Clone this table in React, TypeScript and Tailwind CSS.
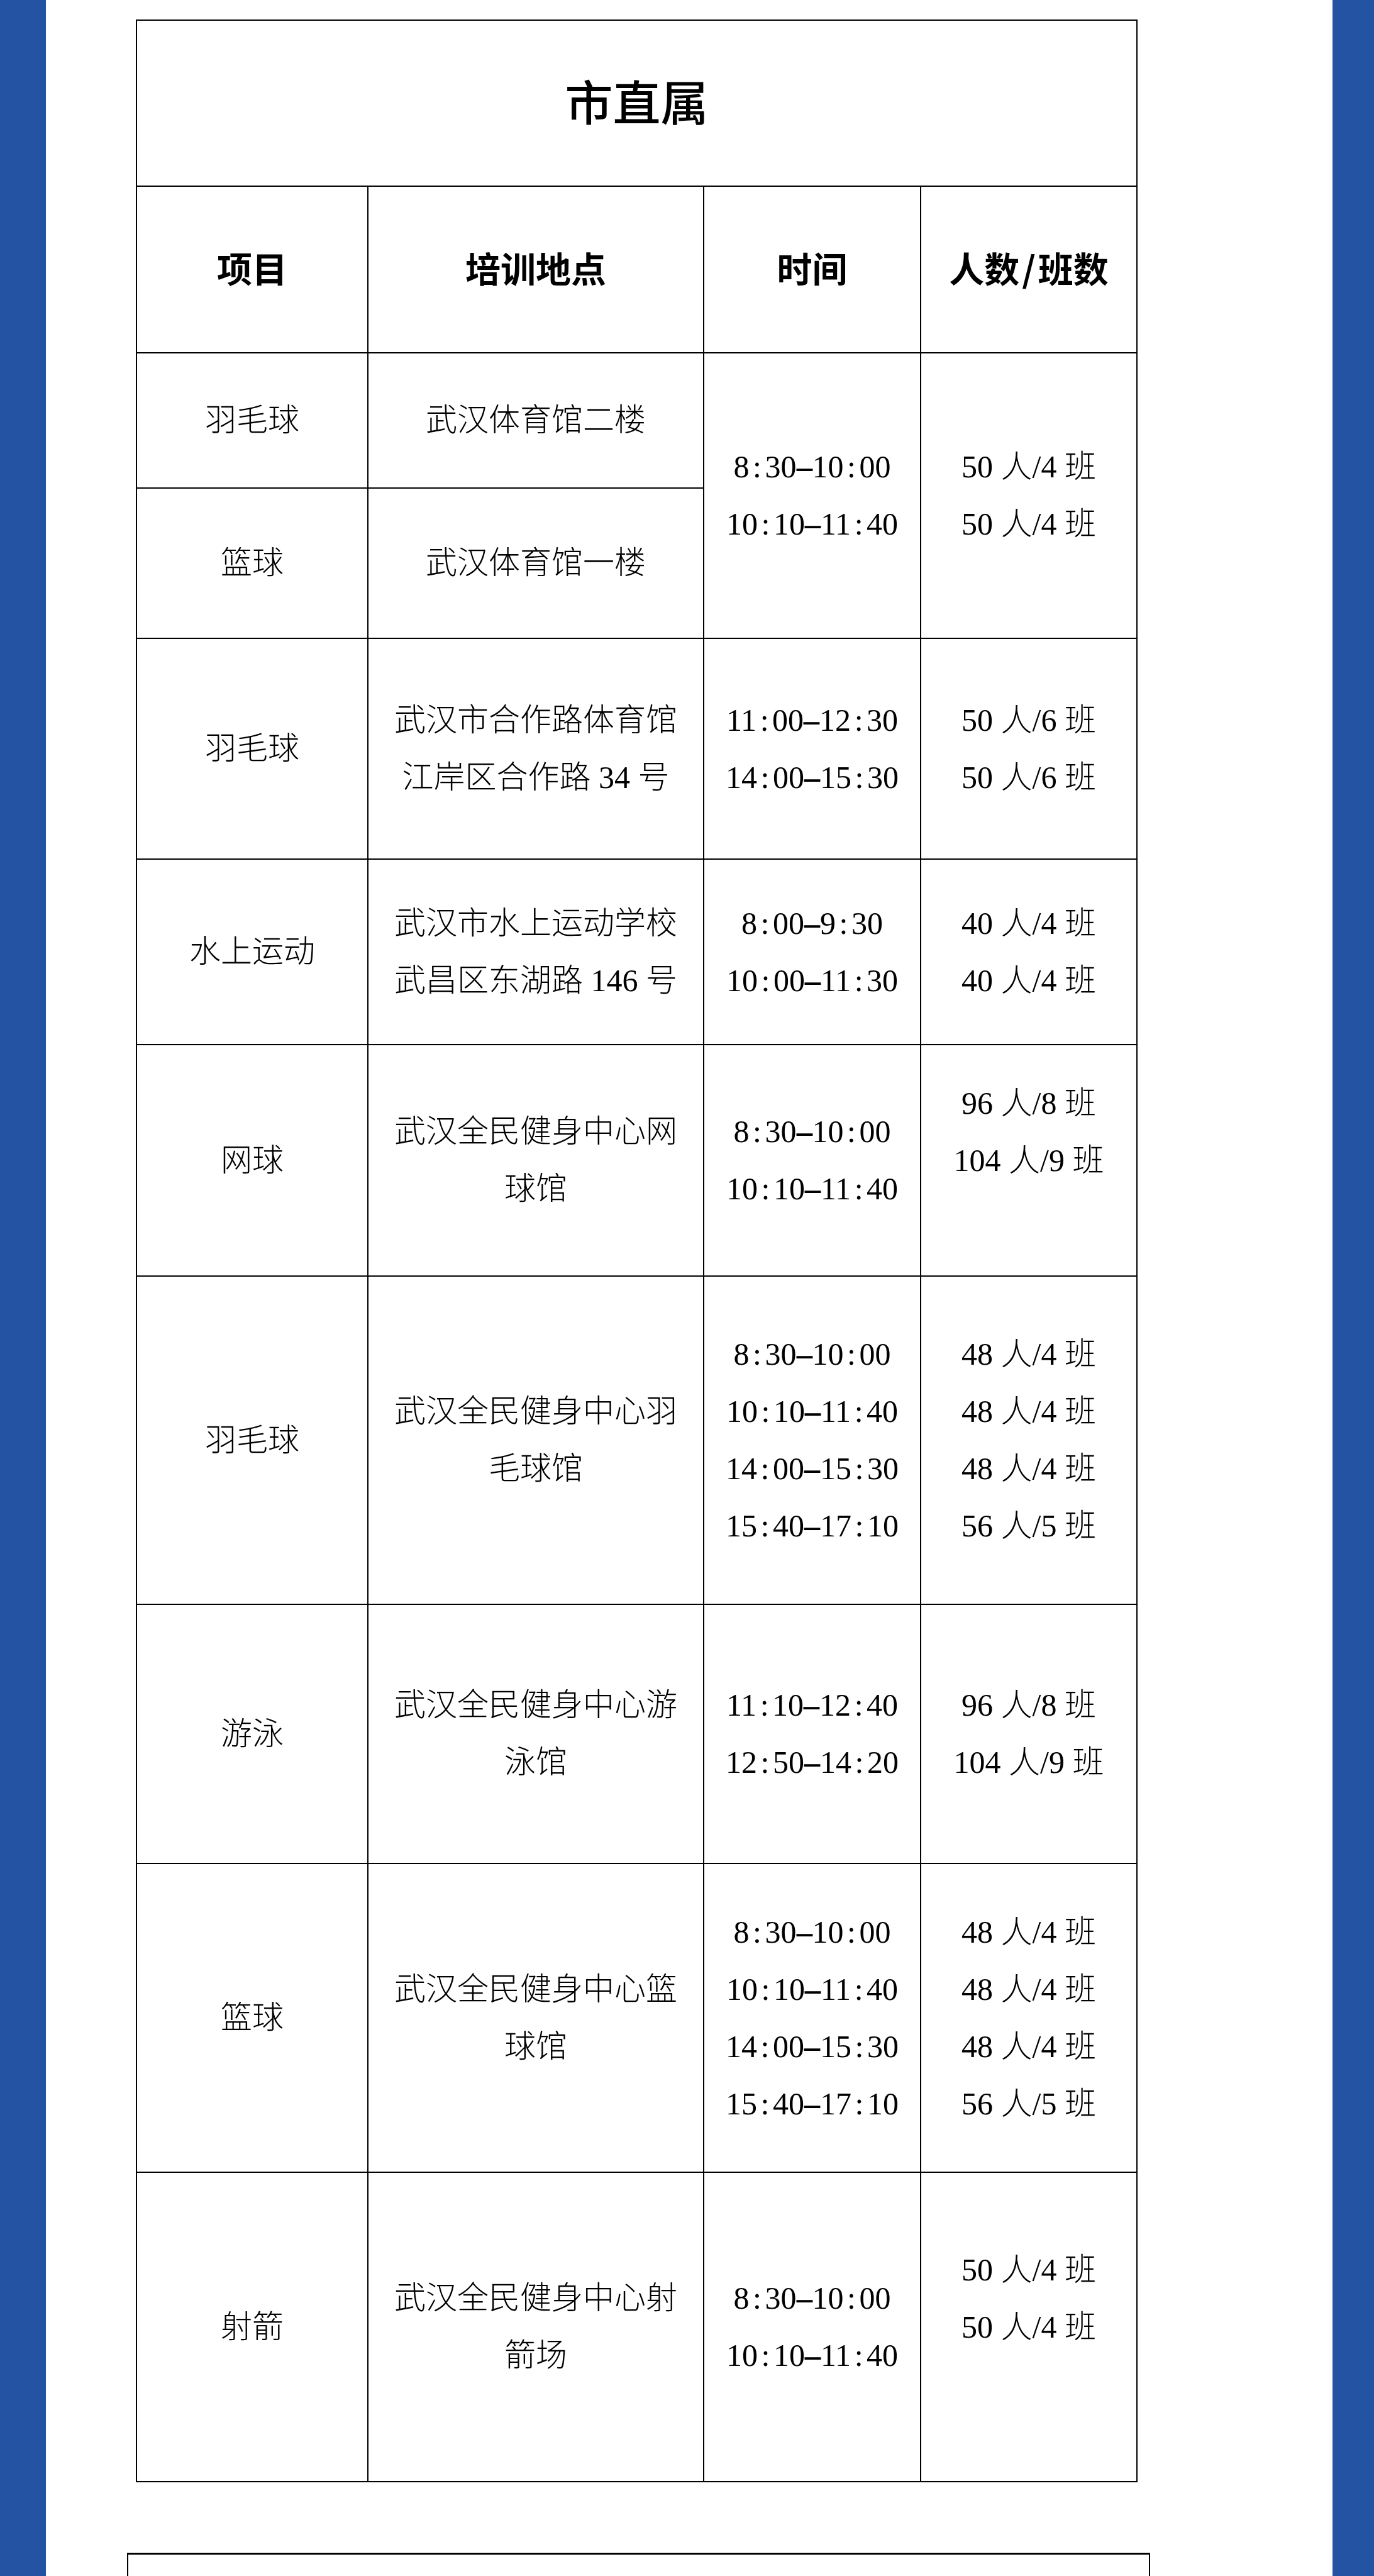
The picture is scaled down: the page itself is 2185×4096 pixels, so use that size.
type Row = {
    name: string;
    place: string[];
    time?: string[];
    count?: string[];
    height: string;
};

const BODY = "font-['Liberation_Serif','Noto_Sans_CJK_SC',serif] text-[50px] leading-[91px] font-light text-black";

const rows: Row[] = [
    {
        name: "羽毛球",
        place: ["武汉体育馆二楼"],
        time: ["8:30-10:00", "10:10-11:40"],
        count: ["50 人/4 班", "50 人/4 班"],
        height: "h-[215px]",
    },
    { name: "篮球", place: ["武汉体育馆一楼"], height: "h-[239px]" },
    {
        name: "羽毛球",
        place: ["武汉市合作路体育馆", "江岸区合作路 34 号"],
        time: ["11:00-12:30", "14:00-15:30"],
        count: ["50 人/6 班", "50 人/6 班"],
        height: "h-[351px]",
    },
    {
        name: "水上运动",
        place: ["武汉市水上运动学校", "武昌区东湖路 146 号"],
        time: ["8:00-9:30", "10:00-11:30"],
        count: ["40 人/4 班", "40 人/4 班"],
        height: "h-[295px]",
    },
    {
        name: "网球",
        place: ["武汉全民健身中心网", "球馆"],
        time: ["8:30-10:00", "10:10-11:40"],
        count: ["96 人/8 班", "104 人/9 班", ""],
        height: "h-[368px]",
    },
    {
        name: "羽毛球",
        place: ["武汉全民健身中心羽", "毛球馆"],
        time: ["8:30-10:00", "10:10-11:40", "14:00-15:30", "15:40-17:10"],
        count: ["48 人/4 班", "48 人/4 班", "48 人/4 班", "56 人/5 班"],
        height: "h-[522px]",
    },
    {
        name: "游泳",
        place: ["武汉全民健身中心游", "泳馆"],
        time: ["11:10-12:40", "12:50-14:20"],
        count: ["96 人/8 班", "104 人/9 班"],
        height: "h-[412px]",
    },
    {
        name: "篮球",
        place: ["武汉全民健身中心篮", "球馆"],
        time: ["8:30-10:00", "10:10-11:40", "14:00-15:30", "15:40-17:10"],
        count: ["48 人/4 班", "48 人/4 班", "48 人/4 班", "56 人/5 班"],
        height: "h-[491px]",
    },
    {
        name: "射箭",
        place: ["武汉全民健身中心射", "箭场"],
        time: ["8:30-10:00", "10:10-11:40"],
        count: ["50 人/4 班", "50 人/4 班", ""],
        height: "h-[492px]",
    },
];

// colon and dash are half-width in the source, like the digits
function Time({ text }: { text: string }) {
    return (
        <>
            {text.split("").map((ch, i) =>
                ch === ":" ? (
                    <span key={i} className="inline-block w-[0.5em] text-center">:</span>
                ) : ch === "-" ? (
                    <span key={i} className="inline-block w-[0.5em] text-center scale-x-[2]">-</span>
                ) : (
                    ch
                )
            )}
        </>
    );
}

function Lines({ items, time }: { items: string[]; time?: boolean }) {
    return (
        <div className="flex flex-col items-center">
            {items.map((t, i) => (
                <div key={i} className="whitespace-pre h-[91px]">
                    {time ? <Time text={t} /> : t}
                </div>
            ))}
        </div>
    );
}

const td = "border-2 border-black text-center align-middle p-0";

export default function App() {
    return (
        <div className="flex w-full h-[4096px] overflow-hidden bg-white">
            <div className="w-[73px] shrink-0 bg-[#2553a4]" />

            <div className="flex-1 flex flex-col pt-[31px]">
                <table className="ml-[143px] border-collapse table-fixed w-[1593px]">
                    <colgroup>
                        <col className="w-[368px]" />
                        <col className="w-[534px]" />
                        <col className="w-[345px]" />
                        <col className="w-[344px]" />
                    </colgroup>
                    <tbody className={BODY}>
                        <tr className="h-[264px]">
                            <td
                                colSpan={4}
                                className="border-2 border-black text-center align-middle pb-[10px] font-['Noto_Sans_CJK_SC',sans-serif] text-[76px] font-medium leading-none"
                            >
                                市直属
                            </td>
                        </tr>
                        <tr className="h-[265px] font-['Noto_Sans_CJK_SC',sans-serif] text-[56px] font-bold">
                            <td className={`${td} pb-[8px]`}>项目</td>
                            <td className={`${td} pb-[8px]`}>培训地点</td>
                            <td className={`${td} pb-[8px]`}>时间</td>
                            <td className={`${td} pb-[8px]`}>
                                人数<span className="px-[4px]">/</span>班数
                            </td>
                        </tr>
                        {rows.map((r, i) => (
                            <tr key={i} className={r.height}>
                                <td className={td}>
                                    <Lines items={[r.name]} />
                                </td>
                                <td className={td}>
                                    <Lines items={r.place} />
                                </td>
                                {r.time && (
                                    <td rowSpan={i === 0 ? 2 : 1} className={td}>
                                        <Lines items={r.time} time />
                                    </td>
                                )}
                                {r.count && (
                                    <td rowSpan={i === 0 ? 2 : 1} className={td}>
                                        <Lines items={r.count} />
                                    </td>
                                )}
                            </tr>
                        ))}
                    </tbody>
                </table>

                <div className="ml-[129px] mt-[112px] w-[1627px] h-[200px] shrink-0 border-t-[3px] border-x-2 border-black" />
            </div>

            <div className="w-[66px] shrink-0 bg-[#2553a4]" />
        </div>
    );
}
